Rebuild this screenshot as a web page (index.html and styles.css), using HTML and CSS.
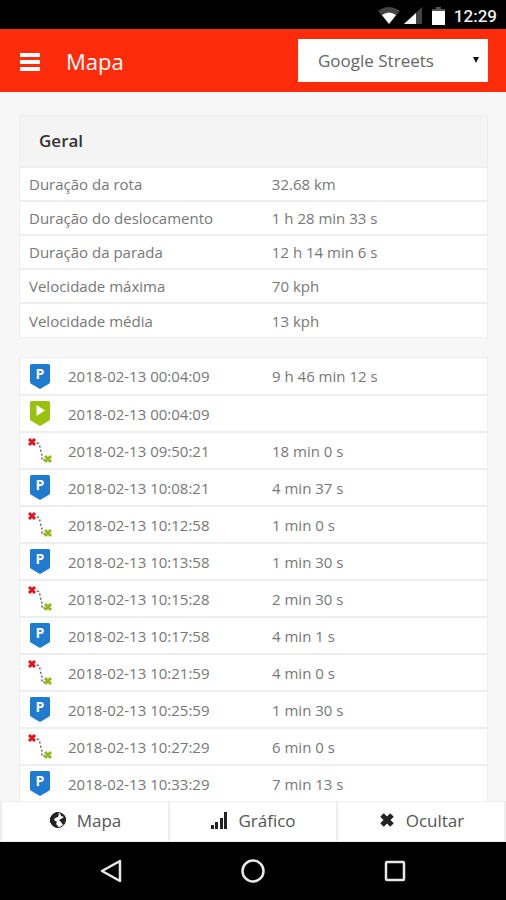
FILE: index.html
```html
<!DOCTYPE html>
<html lang="pt">
<head>
<meta charset="UTF-8">
<meta name="viewport" content="width=device-width, initial-scale=1.0">
<title>Mapa</title>
<link rel="stylesheet" href="styles.css">
</head>
<body>

<!-- shared icons for the route list -->
<svg class="sprite" aria-hidden="true">
    <symbol id="icon-parking" viewBox="0 0 20 25">
        <path d="M1.500 0h17A1.500 1.500 0 0 1 20 1.500V18a2 2 0 0 1-1 1.700L10 25 1 19.700A2 2 0 0 1 0 18V1.500A1.500 1.500 0 0 1 1.500 0z" fill="#1f7bd0"/>
        <text x="10" y="15" text-anchor="middle" font-size="14" font-weight="700" fill="#fff">P</text>
    </symbol>
    <symbol id="icon-start" viewBox="0 0 20 25">
        <path d="M1.500 0h17A1.500 1.500 0 0 1 20 1.500V18a2 2 0 0 1-1 1.700L10 25 1 19.700A2 2 0 0 1 0 18V1.500A1.500 1.500 0 0 1 1.500 0z" fill="#99c10d"/>
        <path d="M6.500 4v11l8.500-5.500z" fill="#fff"/>
    </symbol>
    <symbol id="icon-drive" viewBox="0 0 26 26">
        <path d="M2 1l6 6M8 1l-6 6" stroke="#e3151b" stroke-width="3"/>
        <path d="M18 18l6 6M24 18l-6 6" stroke="#94b91a" stroke-width="3"/>
        <path d="M10 5q3 0 3 6 2 4 2 8v3h3" fill="none" stroke="#666" stroke-width="1.500" stroke-dasharray="2 2"/>
    </symbol>
</svg>

<div class="status-bar">
    <svg width="22" height="18" viewBox="0 0 22 18" aria-hidden="true">
        <path d="M0 4Q11-4 22 4L11 17z" fill="#444"/>
        <path d="M4 8q7-5 14 0l-7 9z" fill="#fff"/>
    </svg>
    <svg width="18" height="18" viewBox="0 0 18 18" aria-hidden="true">
        <path d="M18 0v17H0z" fill="#444"/>
        <path d="M12 6v11H0z" fill="#fff"/>
    </svg>
    <svg class="battery" width="13" height="18" viewBox="0 0 13 18" aria-hidden="true">
        <path d="M4 0h5v2h4v3H0V2h4z" fill="#555"/>
        <path d="M0 4h13v14H0z" fill="#fff"/>
    </svg>
    <span class="clock">12:29</span>
</div>

<header class="top-bar">
    <button type="button" class="menu-button" aria-label="Menu">
        <span></span><span></span><span></span>
    </button>
    <h1>Mapa</h1>
    <div class="map-select">
        <select aria-label="Mapa">
            <option>Google Streets</option>
        </select>
    </div>
</header>

<main class="content">
    <section class="panel">
        <h2>Geral</h2>
        <table class="summary">
            <tr><th scope="row">Duração da rota</th><td>32.68 km</td></tr>
            <tr><th scope="row">Duração do deslocamento</th><td>1 h 28 min 33 s</td></tr>
            <tr><th scope="row">Duração da parada</th><td>12 h 14 min 6 s</td></tr>
            <tr><th scope="row">Velocidade máxima</th><td>70 kph</td></tr>
            <tr><th scope="row">Velocidade média</th><td>13 kph</td></tr>
        </table>
    </section>

    <section class="panel">
        <table class="events">
            <tr><td class="icon"><svg class="pin"><use href="#icon-parking"/></svg></td><td class="date">2018-02-13 00:04:09</td><td>9 h 46 min 12 s</td></tr>
            <tr><td class="icon"><svg class="pin"><use href="#icon-start"/></svg></td><td class="date">2018-02-13 00:04:09</td><td></td></tr>
            <tr><td class="icon"><svg class="drive"><use href="#icon-drive"/></svg></td><td class="date">2018-02-13 09:50:21</td><td>18 min 0 s</td></tr>
            <tr><td class="icon"><svg class="pin"><use href="#icon-parking"/></svg></td><td class="date">2018-02-13 10:08:21</td><td>4 min 37 s</td></tr>
            <tr><td class="icon"><svg class="drive"><use href="#icon-drive"/></svg></td><td class="date">2018-02-13 10:12:58</td><td>1 min 0 s</td></tr>
            <tr><td class="icon"><svg class="pin"><use href="#icon-parking"/></svg></td><td class="date">2018-02-13 10:13:58</td><td>1 min 30 s</td></tr>
            <tr><td class="icon"><svg class="drive"><use href="#icon-drive"/></svg></td><td class="date">2018-02-13 10:15:28</td><td>2 min 30 s</td></tr>
            <tr><td class="icon"><svg class="pin"><use href="#icon-parking"/></svg></td><td class="date">2018-02-13 10:17:58</td><td>4 min 1 s</td></tr>
            <tr><td class="icon"><svg class="drive"><use href="#icon-drive"/></svg></td><td class="date">2018-02-13 10:21:59</td><td>4 min 0 s</td></tr>
            <tr><td class="icon"><svg class="pin"><use href="#icon-parking"/></svg></td><td class="date">2018-02-13 10:25:59</td><td>1 min 30 s</td></tr>
            <tr><td class="icon"><svg class="drive"><use href="#icon-drive"/></svg></td><td class="date">2018-02-13 10:27:29</td><td>6 min 0 s</td></tr>
            <tr><td class="icon"><svg class="pin"><use href="#icon-parking"/></svg></td><td class="date">2018-02-13 10:33:29</td><td>7 min 13 s</td></tr>
        </table>
    </section>
</main>

<div class="actions">
    <button type="button">
        <svg width="18" height="18" viewBox="0 0 18 18" aria-hidden="true">
            <circle cx="9" cy="9" r="7.500" fill="#fff" stroke="#222" stroke-width="1"/>
            <path d="M8 1L4 3 1 7v4l3 4 4 2 1-2-2-2 1-2-3-2 1-2 3-1 1-3z" fill="#222"/>
            <path d="M11 2l1 3 3 1-3 2-2 1 2 2 2 3 2-3 1-3-1-3-2-2z" fill="#222"/>
        </svg>
        Mapa
    </button>
    <button type="button">
        <svg width="18" height="18" viewBox="0 0 18 18" aria-hidden="true">
            <path d="M1 14h3v4H1zM5 11h3v7H5zM10 7h3v11h-3zM14 1h3v17h-3z" fill="#222"/>
        </svg>
        Gráfico
    </button>
    <button type="button">
        <svg width="18" height="18" viewBox="0 0 18 18" aria-hidden="true">
            <path d="M4 4l10 10M14 4L4 14" stroke="#222" stroke-width="5"/>
        </svg>
        Ocultar
    </button>
</div>

<nav class="system-nav">
    <button type="button" aria-label="Voltar">
        <svg width="24" height="24" viewBox="0 0 24 24" aria-hidden="true">
            <path d="M21 2v20L3 12z" fill="none" stroke="#e8e8e8" stroke-width="2.500" stroke-linejoin="round"/>
        </svg>
    </button>
    <button type="button" aria-label="Início">
        <svg width="24" height="24" viewBox="0 0 24 24" aria-hidden="true">
            <circle cx="12" cy="12" r="10.500" fill="none" stroke="#e8e8e8" stroke-width="2.500"/>
        </svg>
    </button>
    <button type="button" aria-label="Recentes">
        <svg width="24" height="24" viewBox="0 0 24 24" aria-hidden="true">
            <rect x="3" y="3" width="18" height="18" rx="1" fill="none" stroke="#e8e8e8" stroke-width="2.500"/>
        </svg>
    </button>
</nav>

</body>
</html>
```
FILE: styles.css
```css
* {
    box-sizing: border-box;
}

body {
    font-family: "Open Sans", "Noto Sans", sans-serif;
    margin: 0;
    height: 100vh;
    display: flex;
    flex-direction: column;
    overflow: hidden;
    background-color: #f7f7f7;
    color: #777;
    font-size: 15px;
}

button {
    font-family: inherit;
    border: 0;
    padding: 0;
    background: none;
    cursor: pointer;
}

svg {
    display: block;
}

.sprite {
    display: none;
}

/* Status bar */
.status-bar {
    display: flex;
    flex: none;
    align-items: center;
    justify-content: flex-end;
    gap: 2px;
    height: 29px;
    padding: 2px 9px 0 0;
    background-color: #000;
}

.status-bar svg:first-child {
    margin-right: 2px;
}

.battery {
    margin: 0 7px 0 8px;
}

.clock {
    font-family: Roboto, sans-serif;
    font-size: 17px;
    font-weight: 500;
    color: #eee;
}

/* Red header */
.top-bar {
    display: flex;
    flex: none;
    align-items: center;
    height: 63px;
    padding: 0 18px 0 20px;
    background-color: #ff2c0c;
}

.menu-button {
    display: flex;
    flex-direction: column;
    gap: 3px;
    width: 20px;
    padding-top: 3px;
}

.menu-button span {
    height: 4px;
    background-color: #fff;
}

.top-bar h1 {
    flex: 1;
    margin: 0 0 0 26px;
    font-size: 22px;
    font-weight: 400;
    color: #fff;
}

.map-select {
    position: relative;
    width: 190px;
}

.map-select select {
    appearance: none;
    display: block;
    width: 100%;
    height: 43px;
    padding: 0 20px;
    border: 0;
    border-radius: 0;
    background-color: #fff;
    font-family: inherit;
    font-size: 17px;
    color: #666;
}

.map-select::after {
    content: "";
    position: absolute;
    top: 18px;
    right: 9px;
    border: 3px solid transparent;
    border-top: 6px solid #111;
    border-bottom: 0;
    pointer-events: none;
}

/* Scrolling content */
.content {
    flex: 1;
    min-height: 0;
    padding: 23px 18px 0 19px;
    overflow-y: auto;
    scrollbar-width: none;
}

.panel {
    margin-bottom: 19px;
    border: 1px solid #eee;
    background-color: #fff;
}

.panel h2 {
    margin: 0;
    padding: 0 19px;
    background-color: #f4f4f4;
    font-size: 17px;
    font-weight: 600;
    line-height: 50px;
    color: #333;
}

table {
    width: 100%;
    table-layout: fixed;
    border-collapse: collapse;
}

th,
td {
    padding: 0 9px;
    text-align: left;
    font-weight: 400;
    white-space: nowrap;
}

.summary th,
.summary td {
    height: 34px;
    border-top: 2px solid #eee;
}

.summary th {
    width: 52%;
}

.events td {
    height: 37px;
    border-bottom: 2px solid #eee;
}

.events .icon {
    width: 39px;
    padding: 0 0 0 7px;
}

.events .date {
    width: 204px;
}

.pin {
    width: 20px;
    height: 25px;
    margin-left: 3px;
}

.drive {
    width: 26px;
    height: 26px;
}

/* Bottom buttons */
.actions {
    display: grid;
    flex: none;
    grid-template-columns: repeat(3, 1fr);
    gap: 2px;
    padding: 1px 2px;
    background-color: #eee;
}

.actions button {
    display: flex;
    align-items: center;
    justify-content: center;
    gap: 10px;
    height: 39px;
    padding-bottom: 3px;
    background-color: #fff;
    font-size: 17px;
    color: #555;
}

.system-nav {
    display: flex;
    flex: none;
    justify-content: center;
    gap: 118px;
    height: 58px;
    background-color: #000;
}
```
